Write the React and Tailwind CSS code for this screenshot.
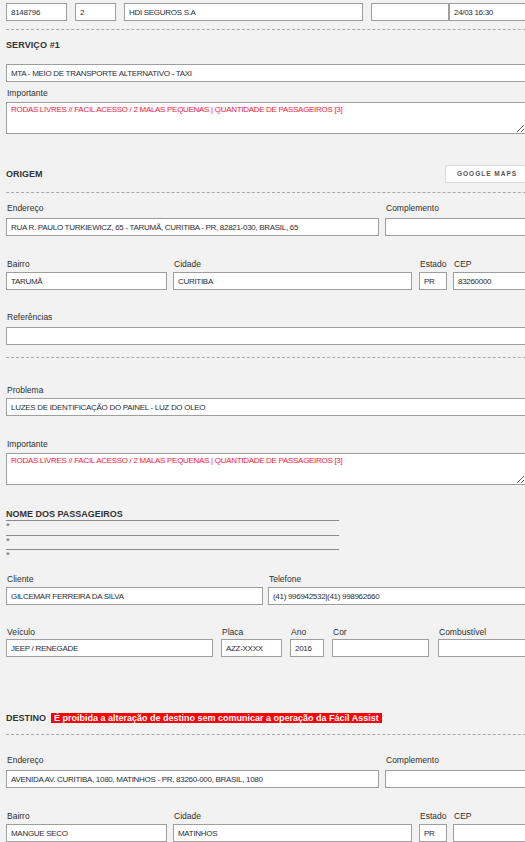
import React from "react";

function Label({ children, className = "" }) {
  return (
    <div className={`h-[12px] leading-[12px] text-[8.5px] text-[#2f2f2f] pl-[1px] whitespace-nowrap ${className}`}>
      {children}
    </div>
  );
}

function Box({ value = "", className = "" }) {
  return (
    <input
      readOnly
      value={value}
      className={`block h-[18px] border border-[#9e9e9e] bg-white px-[4px] text-[8px] tracking-[-0.3px] text-[#2c2c38] outline-none ${className}`}
    />
  );
}

function Area({ value, className = "" }) {
  return (
    <textarea
      readOnly
      value={value}
      className={`block h-[32px] border border-[#9e9e9e] bg-white px-[4px] pt-[2px] leading-[10px] text-[8px] tracking-[-0.3px] text-[#f8203e] outline-none ${className}`}
    />
  );
}

function H({ children, className = "" }) {
  return (
    <div className={`h-[12px] leading-[12px] text-[9px] font-bold text-[#333] whitespace-nowrap ${className}`}>
      {children}
    </div>
  );
}

function Dash({ className = "" }) {
  return <div className={`w-[560px] border-t border-dashed border-[#a8a8a8] ${className}`} />;
}

function Field({ label, value, className = "", boxClass = "", labelClass = "" }) {
  return (
    <div className={`flex-none ${className}`}>
      <Label className={labelClass}>{label}</Label>
      <Box value={value} className={boxClass} />
    </div>
  );
}

const IMPORTANTE =
  "RODAS LIVRES // FACIL ACESSO / 2 MALAS PEQUENAS | QUANTIDADE DE PASSAGEIROS [3]";

export default function App() {
  return (
    <div className="w-[525px] h-[842px] overflow-hidden bg-[#f2f2f2] font-['Liberation_Sans',Arial,sans-serif] text-[#333]">
      <div className="w-[640px] pl-[6px] pt-[3px]">
        {/* top row */}
        <div className="flex">
          <Box className="w-[61px]" value="8148796" />
          <Box className="w-[41px] ml-[8px]" value="2" />
          <Box className="w-[239px] ml-[8px]" value="HDI SEGUROS S.A" />
          <Box className="w-[78px] ml-[8px]" value="" />
          <Box className="w-[120px]" value="24/03 16:30" />
        </div>
        <Dash className="mt-[8px]" />

        {/* Serviço */}
        <H className="mt-[9px] tracking-[0.1px]">SERVIÇO #1</H>
        <Box className="w-[560px] mt-[13px]" value="MTA - MEIO DE TRANSPORTE ALTERNATIVO - TAXI" />
        <Label className="mt-[5px] mb-[3px]">Importante</Label>
        <Area className="w-[520px]" value={IMPORTANTE} />

        {/* Origem */}
        <div className="flex items-center h-[18px] mt-[31px]">
          <H className="w-[439px] flex-none">ORIGEM</H>
          <button className="flex-none h-[18px] w-[92px] border border-[#dadada] bg-white text-left pl-[11px] text-[6.5px] font-bold tracking-[1px] text-[#555]">
            GOOGLE MAPS
          </button>
        </div>
        <Dash className="mt-[9px]" />

        <div className="flex mt-[9px]">
          <Field
            label="Endereço"
            labelClass="mb-[4px]"
            boxClass="w-[373px]"
            value="RUA R. PAULO TURKIEWICZ, 65 - TARUMÃ, CURITIBA - PR, 82821-030, BRASIL, 65"
          />
          <Field label="Complemento" labelClass="mb-[4px]" className="ml-[6px]" boxClass="w-[200px]" value="" />
        </div>

        <div className="flex mt-[22px]">
          <Field label="Bairro" labelClass="mb-[2px]" boxClass="w-[161px]" value="TARUMÃ" />
          <Field label="Cidade" labelClass="mb-[2px]" className="ml-[6px]" boxClass="w-[239px]" value="CURITIBA" />
          <Field label="Estado" labelClass="mb-[2px]" className="ml-[7px]" boxClass="w-[28px]" value="PR" />
          <Field label="CEP" labelClass="mb-[2px]" className="ml-[6px]" boxClass="w-[120px]" value="83260000" />
        </div>

        <Label className="mt-[21px] mb-[4px]">Referências</Label>
        <Box className="w-[560px]" value="" />
        <Dash className="mt-[12px]" />

        <Label className="mt-[26px] mb-[2px]">Problema</Label>
        <Box className="w-[560px]" value="LUZES DE IDENTIFICAÇÃO DO PAINEL - LUZ DO OLEO" />

        <Label className="mt-[22px] mb-[3px]">Importante</Label>
        <Area className="w-[520px]" value={IMPORTANTE} />

        {/* Passageiros */}
        <div className="w-[333px] mt-[23px]">
          <div className="h-[13px] leading-[12px] border-b border-[#8a8a8a] text-[9px] font-bold text-[#333]">
            NOME DOS PASSAGEIROS
          </div>
          <div className="h-[15px] border-b border-[#8a8a8a] text-[9.5px] leading-[9px] text-[#666]">*</div>
          <div className="h-[14px] border-b border-[#8a8a8a] text-[9.5px] leading-[9px] text-[#666]">*</div>
          <div className="h-[14px] text-[9.5px] leading-[9px] text-[#666]">*</div>
        </div>

        <div className="flex mt-[9px]">
          <Field label="Cliente" labelClass="mb-[2px]" boxClass="w-[257px]" value="GILCEMAR FERREIRA DA SILVA" />
          <Field
            label="Telefone"
            labelClass="mb-[2px]"
            className="ml-[5px]"
            boxClass="w-[280px]"
            value="(41) 996942532|(41) 998962660"
          />
        </div>

        <div className="flex mt-[21px]">
          <Field label="Veículo" labelClass="mb-[1px]" boxClass="w-[207px]" value="JEEP / RENEGADE" />
          <Field label="Placa" labelClass="mb-[1px]" className="ml-[8px]" boxClass="w-[61px]" value="AZZ-XXXX" />
          <Field label="Ano" labelClass="mb-[1px]" className="ml-[8px]" boxClass="w-[34px]" value="2016" />
          <Field label="Cor" labelClass="mb-[1px]" className="ml-[8px]" boxClass="w-[97px]" value="" />
          <Field label="Combustível" labelClass="mb-[1px]" className="ml-[9px]" boxClass="w-[120px]" value="" />
        </div>

        {/* Destino */}
        <div className="mt-[55px] h-[12px] leading-[12px] text-[9px] font-bold text-[#333] whitespace-nowrap">
          DESTINO
          <span className="ml-[5px] bg-[#ff0000] text-white px-[3px]">
            É proibida a alteração de destino sem comunicar a operação da Fácil Assist
          </span>
        </div>
        <Dash className="mt-[10px]" />

        <div className="flex mt-[19px]">
          <Field
            label="Endereço"
            labelClass="mb-[4px]"
            boxClass="w-[373px]"
            value="AVENIDA AV. CURITIBA, 1080, MATINHOS - PR, 83260-000, BRASIL, 1080"
          />
          <Field label="Complemento" labelClass="mb-[4px]" className="ml-[6px]" boxClass="w-[200px]" value="" />
        </div>

        <div className="flex mt-[22px]">
          <Field label="Bairro" labelClass="mb-[2px]" boxClass="w-[161px]" value="MANGUE SECO" />
          <Field label="Cidade" labelClass="mb-[2px]" className="ml-[6px]" boxClass="w-[239px]" value="MATINHOS" />
          <Field label="Estado" labelClass="mb-[2px]" className="ml-[7px]" boxClass="w-[28px]" value="PR" />
          <Field label="CEP" labelClass="mb-[2px]" className="ml-[6px]" boxClass="w-[120px]" value="" />
        </div>
      </div>
    </div>
  );
}
